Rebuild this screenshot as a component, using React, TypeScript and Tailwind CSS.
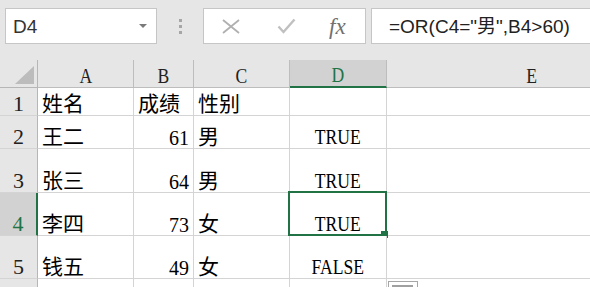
import React from 'react';

const serif = "font-['Liberation_Serif','Noto_Sans_CJK_SC',serif]";
const sans = "font-['Liberation_Sans','Noto_Sans_CJK_SC',sans-serif]";

type Row = {
  n: string;
  h: string;
  a: string;
  b: string;
  bNum: boolean;
  c: string;
  d: string;
};

const rows: Row[] = [
  { n: '1', h: 'h-[28px]', a: '姓名', b: '成绩', bNum: false, c: '性别', d: '' },
  { n: '2', h: 'h-[33px]', a: '王二', b: '61', bNum: true, c: '男', d: 'TRUE' },
  { n: '3', h: 'h-[44px]', a: '张三', b: '64', bNum: true, c: '男', d: 'TRUE' },
  { n: '4', h: 'h-[43px]', a: '李四', b: '73', bNum: true, c: '女', d: 'TRUE' },
  { n: '5', h: 'h-[43px]', a: '钱五', b: '49', bNum: true, c: '女', d: 'FALSE' },
];

const cell =
  'flex shrink-0 items-end whitespace-nowrap border-r border-b border-[#d4d4d4] bg-white px-[4px] pb-0';

const Letters = ({ children }: { children: React.ReactNode }) => (
  <span className="inline-block origin-center scale-x-[0.8] text-[22px]">{children}</span>
);

const TopBar = () => (
  <div className="flex h-[60px] items-start pt-[8px] pl-[5px]">
    <div className="flex h-[36px] w-[152px] shrink-0 items-center justify-between border border-[#c6c6c6] bg-white pr-[9px] pl-[7px]">
      <span className={`${sans} text-[19px] leading-none text-[#333]`}>D4</span>
      <svg width="8" height="4" viewBox="0 0 8 4">
        <polygon points="0,0 8,0 4,4" fill="#7a7a7a" />
      </svg>
    </div>

    <div className="flex h-[36px] w-[46px] shrink-0 flex-col items-center justify-center gap-[3px]">
      <span className="size-[3px] bg-[#a6a6a6]" />
      <span className="size-[3px] bg-[#a6a6a6]" />
      <span className="size-[3px] bg-[#a6a6a6]" />
    </div>

    <div className="flex h-[36px] w-[163px] shrink-0 items-center border border-[#c6c6c6] bg-white pl-[18px]">
      <svg width="18" height="15" viewBox="0 0 18 15">
        <path d="M1 1 L17 14 M17 1 L1 14" stroke="#b0b0b0" strokeWidth="1.8" fill="none" />
      </svg>
      <svg className="ml-[37px]" width="19" height="16" viewBox="0 0 19 16">
        <path d="M1.5 8.5 L6.5 14 L17.5 1.5" stroke="#c0c0c0" strokeWidth="2.4" fill="none" />
      </svg>
      <span className="ml-[33px] font-['Liberation_Serif',serif] text-[23px] leading-none text-[#707070] italic">
        fx
      </span>
    </div>

    <div className="ml-[5px] flex h-[36px] flex-1 items-center border-y border-l border-[#c6c6c6] bg-white pl-[17px]">
      <span className={`${sans} text-[19px] leading-none whitespace-nowrap text-[#222]`}>
        =OR(C4="男",B4&gt;60)
      </span>
    </div>
  </div>
);

const HeaderRow = () => {
  const head =
    'flex shrink-0 items-end justify-center border-r border-b border-[#bdbdbd] bg-[#e6e6e6] text-[#222]';
  return (
    <div className="flex h-[28px]">
      <div className="flex w-[38px] shrink-0 items-end justify-end border-r border-b border-[#b6b6b6] bg-[#e6e6e6] pr-[3px] pb-[3px]">
        <svg width="19" height="18" viewBox="0 0 19 18">
          <polygon points="19,0 19,18 0,18" fill="#bcbcbc" />
        </svg>
      </div>
      <div className={`${head} w-[96px]`}>
        <Letters>A</Letters>
      </div>
      <div className={`${head} w-[60px]`}>
        <Letters>B</Letters>
      </div>
      <div className={`${head} w-[96px]`}>
        <Letters>C</Letters>
      </div>
      <div className="flex w-[97px] shrink-0 items-end justify-center border-r border-b-2 border-r-[#bdbdbd] border-b-[#217346] bg-[#d2d2d2] text-[#217346]">
        <Letters>D</Letters>
      </div>
      <div className={`${head} w-[290px]`}>
        <Letters>E</Letters>
      </div>
    </div>
  );
};

const DataRow = ({ row }: { row: Row }) => {
  const active = row.n === '4';
  return (
    <div className={`flex ${row.h}`}>
      <div
        className={
          active
            ? 'flex w-[38px] shrink-0 items-end justify-center border-r-2 border-b border-r-[#217346] border-b-[#d4d4d4] bg-[#d2d2d2] text-[22px] text-[#217346]'
            : 'flex w-[38px] shrink-0 items-end justify-center border-r border-b border-r-[#b6b6b6] border-b-[#d4d4d4] bg-[#e6e6e6] text-[22px] text-[#222]'
        }
      >
        {row.n}
      </div>
      <div className={`${cell} w-[96px] text-[21px]`}>{row.a}</div>
      <div className={`${cell} w-[60px] ${row.bNum ? 'justify-end text-[20px]' : 'text-[21px]'}`}>
        {row.b}
      </div>
      <div className={`${cell} w-[96px] text-[21px]`}>{row.c}</div>
      <div className={`${cell} relative w-[97px] justify-center`}>
        {row.d && <Letters>{row.d}</Letters>}
        {active && (
          <div className="absolute -top-[2px] -right-[1px] -bottom-[1px] -left-[2px] border-2 border-[#217346]">
            <span className="absolute -right-[3px] -bottom-[4px] size-[7px] bg-[#217346]" />
          </div>
        )}
      </div>
      <div className={`${cell} w-[290px]`} />
    </div>
  );
};

export default function App() {
  return (
    <div className="relative h-[287px] w-[590px] overflow-hidden bg-[#e6e6e6]">
      <TopBar />
      <div className={`${serif} text-[20px] leading-none text-black`}>
        <HeaderRow />
        {rows.map((row) => (
          <DataRow key={row.n} row={row} />
        ))}
        <div className="flex h-[20px]">
          <div className="w-[38px] shrink-0 border-r border-[#b6b6b6] bg-[#e6e6e6]" />
          <div className={`${cell} w-[96px]`} />
          <div className={`${cell} w-[60px]`} />
          <div className={`${cell} w-[96px]`} />
          <div className={`${cell} w-[97px]`} />
          <div className={`${cell} w-[290px]`} />
        </div>
      </div>

      <div className="absolute top-[281px] left-[388px] h-[12px] w-[30px] border border-[#a6a6a6] bg-white">
        <span className="absolute top-[3px] left-[3px] h-[2px] w-[21px] bg-[#a0a0a0]" />
      </div>
    </div>
  );
}
